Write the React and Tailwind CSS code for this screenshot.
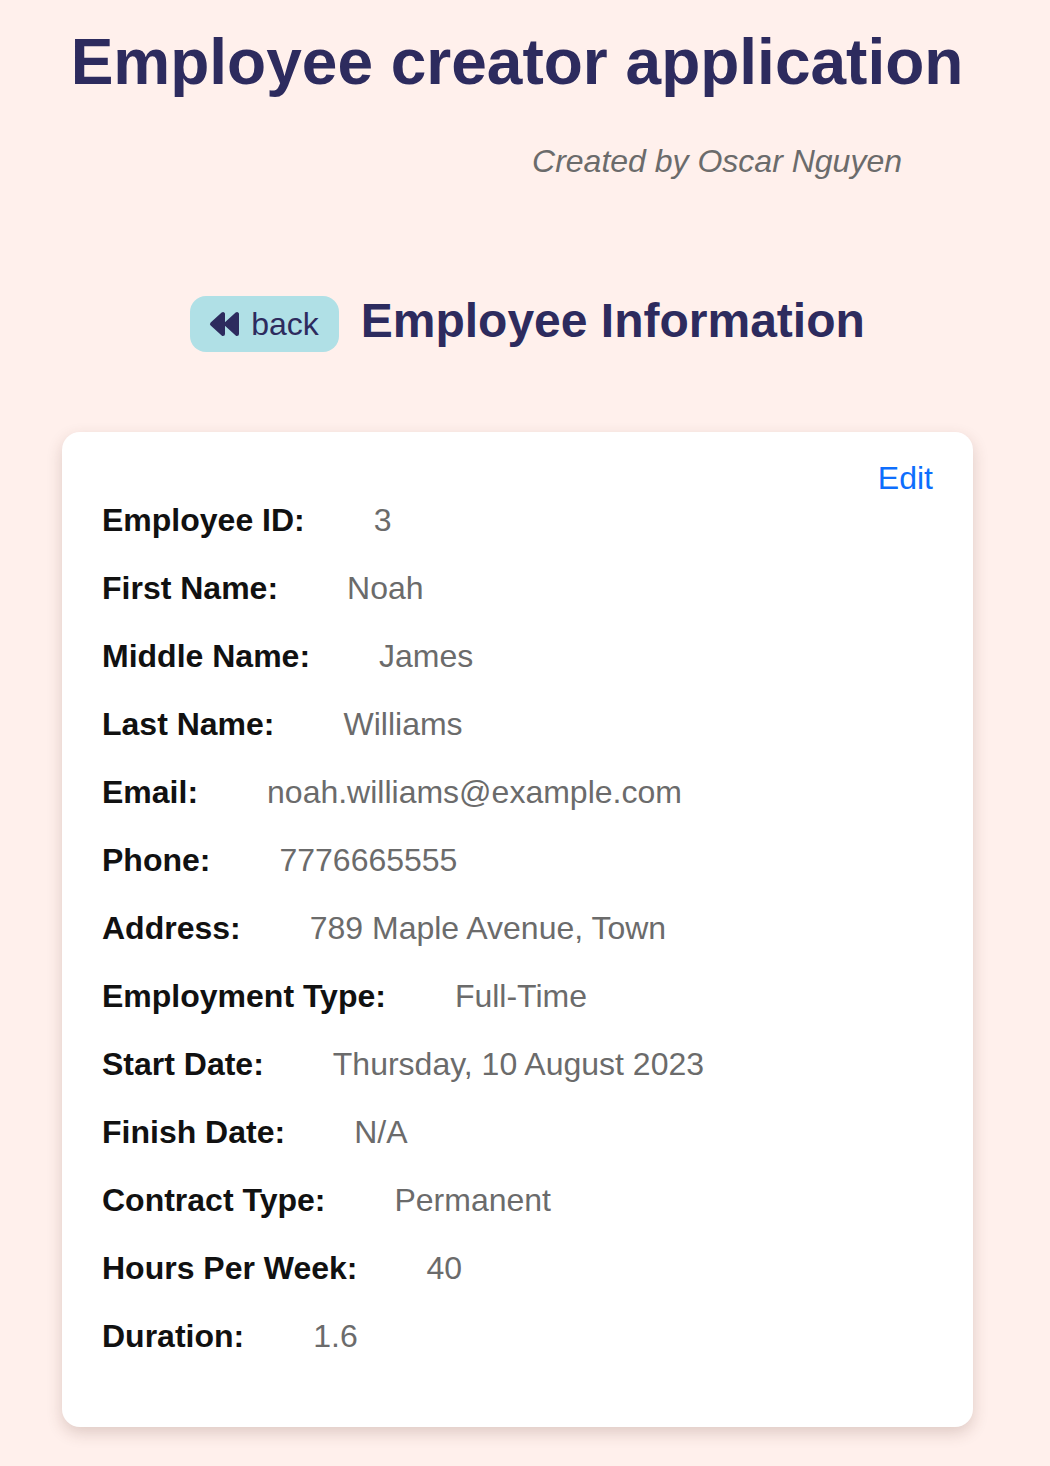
import React from "react";

/* ================= DATA ================= */

const employee = [
  { label: "Employee ID:", value: "3" },
  { label: "First Name:", value: "Noah" },
  { label: "Middle Name:", value: "James" },
  { label: "Last Name:", value: "Williams" },
  { label: "Email:", value: "noah.williams@example.com" },
  { label: "Phone:", value: "7776665555" },
  { label: "Address:", value: "789 Maple Avenue, Town" },
  { label: "Employment Type:", value: "Full-Time" },
  { label: "Start Date:", value: "Thursday, 10 August 2023" },
  { label: "Finish Date:", value: "N/A" },
  { label: "Contract Type:", value: "Permanent" },
  { label: "Hours Per Week:", value: "40" },
  { label: "Duration:", value: "1.6" },
];

/* ================= COMPONENT ================= */

export default function App() {
  return (
    <div className="min-h-screen bg-[#fff0ec] font-['Liberation_Sans',Arial,sans-serif] pb-[38px]">
      {/* ================= HEADER ================= */}
      <h1 className="pt-[25px] pr-[16px] text-center text-[64px] leading-[74px] font-bold text-[#2d2b5e]">
        Employee creator application
      </h1>
      <p className="mt-[44px] pr-[148px] text-right text-[32px] leading-[37px] italic text-[#6b6b6b]">
        Created by Oscar Nguyen
      </p>

      {/* ================= TITLE ROW ================= */}
      <div className="mt-[116px] flex items-center justify-center gap-[22px] pl-[5px]">
        <BackButton />
        <h2 className="-mt-[6px] text-[48px] leading-[56px] font-bold text-[#2d2b5e]">
          Employee Information
        </h2>
      </div>

      {/* ================= CARD ================= */}
      <div className="mt-[80px] ml-[62px] w-[911px] rounded-[18px] bg-white px-[40px] pt-[28px] pb-[72px] shadow-[0_6px_16px_rgba(90,50,40,0.2)]">
        <div className="flex justify-end">
          <a className="text-[32px] leading-[37px] text-[#0d6efd] cursor-pointer">
            Edit
          </a>
        </div>
        <div className="mt-[5px] flex flex-col gap-[31px]">
          {employee.map((row) => (
            <div key={row.label} className="flex text-[32px] leading-[37px]">
              <span className="font-bold text-[#111]">{row.label}</span>
              <span className="ml-[69px] text-[#6b6b6b]">{row.value}</span>
            </div>
          ))}
        </div>
      </div>
    </div>
  );
}

/* ================= SMALL UI COMPONENTS ================= */

function BackButton() {
  return (
    <button className="flex h-[56px] items-center gap-[9px] rounded-[16px] bg-[#b0e0e6] pl-[19px] pr-[20px] text-[32px] leading-[37px] text-[#2d2b5e]">
      <svg width="33" height="26" viewBox="0 0 33 26" fill="#2d2b5e">
        <path
          d="M3 13 L14 3 L14 23 Z M17 13 L28 3 L28 23 Z"
          stroke="#2d2b5e"
          strokeWidth="4"
          strokeLinejoin="round"
        />
      </svg>
      <span>back</span>
    </button>
  );
}
